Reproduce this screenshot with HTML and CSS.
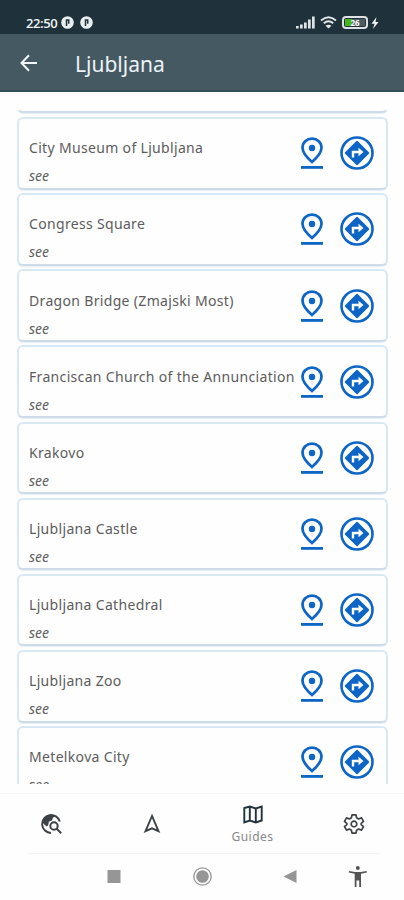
FILE: index.html
```
<!DOCTYPE html>
<html lang="en">
  <head>
    <meta charset="utf-8">
    <title>Ljubljana</title>
    <link rel="stylesheet" href="styles.css">
  </head>
  <body>
    <svg class="defs">
      <symbol id="pin" viewBox="0 0 22 32">
        <path d="M11 1.600c-5.300 0-9.500 4-9.500 9.200 0 4.400 3.200 8.700 9.500 14.200 6.300-5.500 9.500-9.800 9.500-14.200 0-5.200-4.200-9.200-9.500-9.200z" fill="none" stroke="currentColor" stroke-width="2.700"/>
        <circle cx="11" cy="11" r="3.200" fill="currentColor"/>
        <path d="M0 29h22v2.800H0z" fill="currentColor"/>
      </symbol>
      <symbol id="route" viewBox="0 0 34 34">
        <circle cx="17" cy="17" r="15.500" fill="none" stroke="currentColor" stroke-width="2.600"/>
        <path d="M17 6l11 11-11 11L6 17z" fill="currentColor" stroke="currentColor" stroke-width="2.400" stroke-linejoin="round"/>
        <path d="M13 21.500V16h6" fill="none" stroke="#fff" stroke-width="2.400"/>
        <path d="M18.500 11.800l5 4.200-5 4.200z" fill="#fff"/>
      </symbol>
    </svg>
    <div class="status-bar">
      <span class="time">22:50</span>
      <svg class="badge" viewBox="0 0 13 13"><circle cx="6.500" cy="6.500" r="6.300" fill="#e9eff1"/><path d="M5.500 10V4h2.200v3H7" fill="none" stroke="#1f313a" stroke-width="1.500"/></svg>
      <svg class="badge" viewBox="0 0 13 13"><circle cx="6.500" cy="6.500" r="6.300" fill="#e9eff1"/><path d="M5.500 10V4h2.200v3H7" fill="none" stroke="#1f313a" stroke-width="1.500"/></svg>
      <span class="spacer"></span>
      <svg class="signal" viewBox="0 0 19 13" fill="#dfe5e7"><path d="M0 10h2.700v2.500H0zM4 8.500h2.700v4H4zM8 6.500h2.700v6H8zM12 3.500h2.700v9H12zM16 .5h2.700v12H16z"/></svg>
      <svg class="wifi" viewBox="0 0 17 13" fill="none" stroke="#dfe5e7" stroke-width="2"><path d="M1 4.500q7.500-6.500 15 0M3.800 7.300q4.700-4 9.400 0"/><path d="M8.500 12.500L5.500 9.800q3-2.200 6 0z" fill="#dfe5e7" stroke="none"/></svg>
      <span class="battery"><span class="level">26</span></span>
      <svg class="bolt" viewBox="0 0 8 12"><path d="M5.500 0L.5 6.800h3L2 12l5.500-7h-3z" fill="#f0f4f5"/></svg>
    </div>
    <div class="app-bar">
      <svg class="back" viewBox="0 0 18 18" fill="none" stroke="#f1f5f7" stroke-width="2"><path d="M17 9H2M9 1.200L1.500 9 9 16.800"/></svg>
      <h1>Ljubljana</h1>
    </div>
    <div class="list">
      <div class="card partial"></div>
      <div class="card">
        <div class="info"><div class="name">City Museum of Ljubljana</div><div class="kind">see</div></div>
        <svg class="pin"><use href="#pin"/></svg>
        <svg class="route"><use href="#route"/></svg>
      </div>
      <div class="card">
        <div class="info"><div class="name">Congress Square</div><div class="kind">see</div></div>
        <svg class="pin"><use href="#pin"/></svg>
        <svg class="route"><use href="#route"/></svg>
      </div>
      <div class="card">
        <div class="info"><div class="name">Dragon Bridge (Zmajski Most)</div><div class="kind">see</div></div>
        <svg class="pin"><use href="#pin"/></svg>
        <svg class="route"><use href="#route"/></svg>
      </div>
      <div class="card">
        <div class="info"><div class="name">Franciscan Church of the Annunciation</div><div class="kind">see</div></div>
        <svg class="pin"><use href="#pin"/></svg>
        <svg class="route"><use href="#route"/></svg>
      </div>
      <div class="card">
        <div class="info"><div class="name">Krakovo</div><div class="kind">see</div></div>
        <svg class="pin"><use href="#pin"/></svg>
        <svg class="route"><use href="#route"/></svg>
      </div>
      <div class="card">
        <div class="info"><div class="name">Ljubljana Castle</div><div class="kind">see</div></div>
        <svg class="pin"><use href="#pin"/></svg>
        <svg class="route"><use href="#route"/></svg>
      </div>
      <div class="card">
        <div class="info"><div class="name">Ljubljana Cathedral</div><div class="kind">see</div></div>
        <svg class="pin"><use href="#pin"/></svg>
        <svg class="route"><use href="#route"/></svg>
      </div>
      <div class="card">
        <div class="info"><div class="name">Ljubljana Zoo</div><div class="kind">see</div></div>
        <svg class="pin"><use href="#pin"/></svg>
        <svg class="route"><use href="#route"/></svg>
      </div>
      <div class="card">
        <div class="info"><div class="name">Metelkova City</div><div class="kind">see</div></div>
        <svg class="pin"><use href="#pin"/></svg>
        <svg class="route"><use href="#route"/></svg>
      </div>
    </div>
    <div class="tabs">
      <div class="tab">
        <svg width="22" height="22" viewBox="0 0 22 22" fill="none" stroke="#3c4245" stroke-width="2"><path d="M11 20A9 9 0 1 1 19.800 8.500"/><path d="M2 9l4.500 4.500 1.500-1 1-4 3-1 1-3 2.500-1C12 .8 4 .8 2 9z" fill="#3c4245" stroke="none"/><circle cx="14" cy="13" r="3.700"/><path d="M16.700 15.700l4.500 4.500"/></svg>
      </div>
      <div class="tab">
        <svg width="18" height="21" viewBox="0 0 18 21" fill="none" stroke="#3c4245" stroke-width="1.900"><path d="M9 3L2.500 18.200 9 15.300l6.500 2.900z"/></svg>
      </div>
      <div class="tab active">
        <svg width="20" height="19" viewBox="0 0 20 19" fill="none" stroke="#21343e" stroke-width="1.900"><path d="M1.300 3v14.500l5.500-2 6 2 5.900-2V1.500l-5.900 2-6-2zM6.800 1.500v14M12.800 3.500v14"/></svg>
        <span>Guides</span>
      </div>
      <div class="tab">
        <svg width="22" height="22" viewBox="-11 -11 22 22" fill="none" stroke="#3c4245" stroke-width="1.700" stroke-linejoin="round"><path d="M-2-9.200h4l.6 3 2 1.200 2.900-1.100 2 3.500-2.300 1.900v1.400l2.300 1.900-2 3.500-2.900-1.100-2 1.200-.6 3h-4l-.6-3-2-1.200-2.900 1.100-2-3.500 2.300-1.900v-1.400l-2.300-1.900 2-3.500 2.900 1.100 2-1.200z"/><circle r="2.800"/></svg>
      </div>
    </div>
    <div class="system-nav">
      <svg width="100%" height="46" viewBox="0 0 404 46" fill="#969696"><path d="M107.500 16h13v13h-13zM296.500 16v13l-13-6.500z"/><circle cx="202.500" cy="22.500" r="6.300"/><circle cx="202.500" cy="22.500" r="8.700" fill="none" stroke="#969696" stroke-width="1.300"/><g fill="#555"><circle cx="357.800" cy="14" r="2"/><path d="M349 17l6 1h5.600l6-1 .3 1.600-5.900 1.200V33h-1.800v-6.500h-2.700V33h-1.800V19.800l-6-1.200z"/></g></svg>
    </div>
  </body>
</html>
```
FILE: styles.css
```
* {
  box-sizing: border-box;
}

body {
  margin: 0;
  height: 900px;
  display: flex;
  flex-direction: column;
  overflow: hidden;
  background: #fefefe;
  font-family: "Noto Sans", sans-serif;
}

svg {
  flex: none;
  display: block;
}

.defs {
  display: none;
}

.status-bar {
  height: 34px;
  flex: none;
  display: flex;
  align-items: center;
  padding: 11px 25px 0 26px;
  background: #1f313a;
  color: #f0f4f5;
}

.time {
  width: 35px;
  font: 600 13px/14px "Open Sans", sans-serif;
  letter-spacing: -0.400px;
}

.badge {
  width: 13px;
  height: 13px;
  margin-right: 6px;
}

.spacer {
  flex: 1;
}

.signal {
  width: 19px;
  height: 13px;
  margin-right: 5px;
}

.wifi {
  width: 17px;
  height: 13px;
  margin-right: 5px;
}

.battery {
  width: 26px;
  height: 13px;
  margin-right: 3px;
  padding: 1px;
  border: 2px solid #dce2e4;
  border-radius: 4px;
}

.level {
  display: block;
  height: 7px;
  background: linear-gradient(to right, #48b31b 35%, #4e5c62 35%);
  color: #fff;
  font: bold 8px/7px "Open Sans", sans-serif;
  text-align: center;
}

.bolt {
  width: 8px;
  height: 12px;
}

.app-bar {
  height: 58px;
  flex: none;
  display: flex;
  align-items: center;
  padding: 2px 0 0 20px;
  background: #455963;
  border-bottom: 2px solid #33505a;
}

.back {
  width: 18px;
  height: 18px;
}

h1 {
  margin: 2px 0 0 37px;
  color: #edf3f6;
  font-size: 21px;
  font-weight: normal;
}

.list {
  height: 674px;
  flex: none;
  margin: 18px 15px 0 17px;
  overflow: hidden;
}

.card {
  width: 371px;
  height: 72.700px;
  margin-bottom: 3.450px;
  padding: 0 12px 0 10px;
  display: flex;
  align-items: center;
  background: #fefefe;
  border: 2px solid #d9e8f5;
  border-bottom-color: #cddce8;
  border-radius: 6px;
  box-shadow: 0 1px 1px #e6eef4;
  color: #0d65c5;
}

.partial {
  height: 72px;
  margin-top: -69px;
  margin-bottom: 4px;
}

.info {
  flex: 1;
  width: 0;
  padding-top: 18px;
  white-space: nowrap;
}

.name {
  color: #5c5c5c;
  font-size: 14px;
  line-height: 28px;
  letter-spacing: 0.330px;
}

.kind {
  color: #606060;
  font-size: 14px;
  font-style: italic;
  line-height: 28px;
}

.pin {
  width: 22px;
  height: 32px;
  margin-right: 17px;
}

.route {
  width: 34px;
  height: 34px;
}

.tabs {
  height: 60px;
  flex: none;
  display: flex;
  margin-top: 9px;
  border-top: 1px solid #f5f5f5;
}

.tab {
  width: 101px;
  display: flex;
  flex-direction: column;
  align-items: center;
  justify-content: center;
  color: #888;
  font-size: 12px;
  letter-spacing: 0.500px;
}

.tab span {
  margin-top: 5px;
  line-height: 16px;
}

.active {
  padding-top: 2px;
}

.system-nav {
  height: 47px;
  margin: 0 24px 0 28px;
  border-top: 1px solid #f3f3f3;
}

.system-nav svg {
  width: 404px;
  margin-left: -28px;
}
```
